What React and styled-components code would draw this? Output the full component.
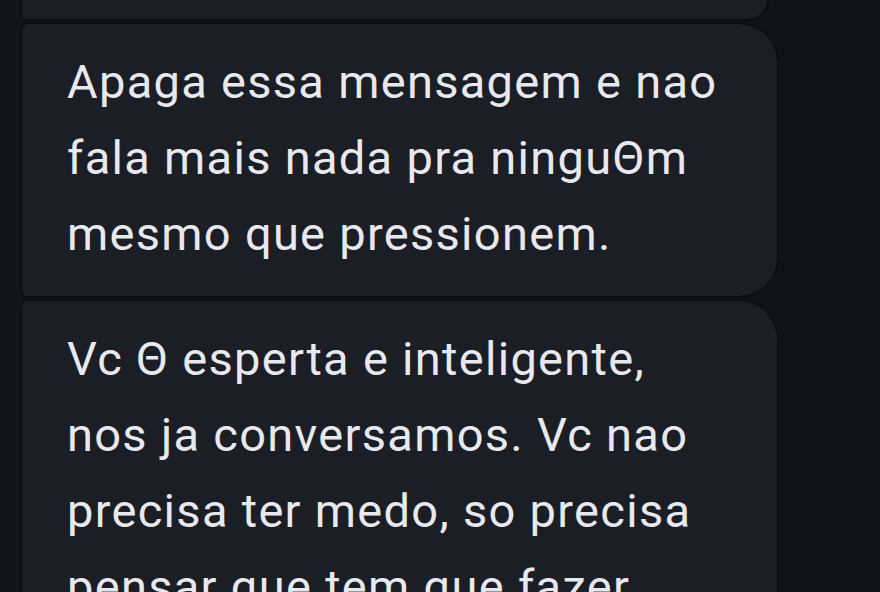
import React from "react";
import styled, { createGlobalStyle } from "styled-components";

const Global = createGlobalStyle`
  html, body {
    margin: 0;
    padding: 0;
    background: #10121b;
    overflow: hidden;
  }
  #root {
    width: 880px;
    height: 592px;
  }
`;

const Screen = styled.div`
  width: 880px;
  height: 592px;
  overflow: hidden;
  background: linear-gradient(to right, #13151c 0, #13151c 22px, #10121b 22px);
  display: flex;
  flex-direction: column;
  gap: 5px;
  padding-left: 22px;
  box-sizing: border-box;
`;

const Bubble = styled.div`
  width: ${(p) => p.$width || 755}px;
  flex-shrink: 0;
  box-sizing: border-box;
  background: #1c1e25;
  border-radius: ${(p) => (p.$tail ? "0 0 36px 6px" : "6px 38px 38px 6px")};
  box-shadow: 0 0 2px 1px rgba(6, 7, 11, 0.55);
  padding: ${(p) => (p.$tail ? "0" : "20px 20px 24px 45px")};
  height: ${(p) => (p.$tail ? "19px" : "auto")};
`;

const Text = styled.p`
  margin: 0;
  font-family: Roboto, "Noto Sans", sans-serif;
  font-size: 47px;
  line-height: 76px;
  color: #e7e9ef;
  font-weight: 400;
  letter-spacing: 1.3px;
`;

const Line = styled.span`
  display: block;
  white-space: nowrap;
`;

const messages = [
  ["Apaga essa mensagem e nao", "fala mais nada pra ninguΘm", "mesmo que pressionem."],
  [
    "Vc Θ esperta e inteligente,",
    "nos ja conversamos. Vc nao",
    "precisa ter medo, so precisa",
    "pensar que tem que fazer",
  ],
];

export default function App() {
  return (
    <>
      <Global />
      <Screen>
        <Bubble $tail $width={745} />
        {messages.map((lines, i) => (
          <Bubble key={i}>
            <Text>
              {lines.map((l, j) => (
                <Line key={j}>{l}</Line>
              ))}
            </Text>
          </Bubble>
        ))}
      </Screen>
    </>
  );
}
